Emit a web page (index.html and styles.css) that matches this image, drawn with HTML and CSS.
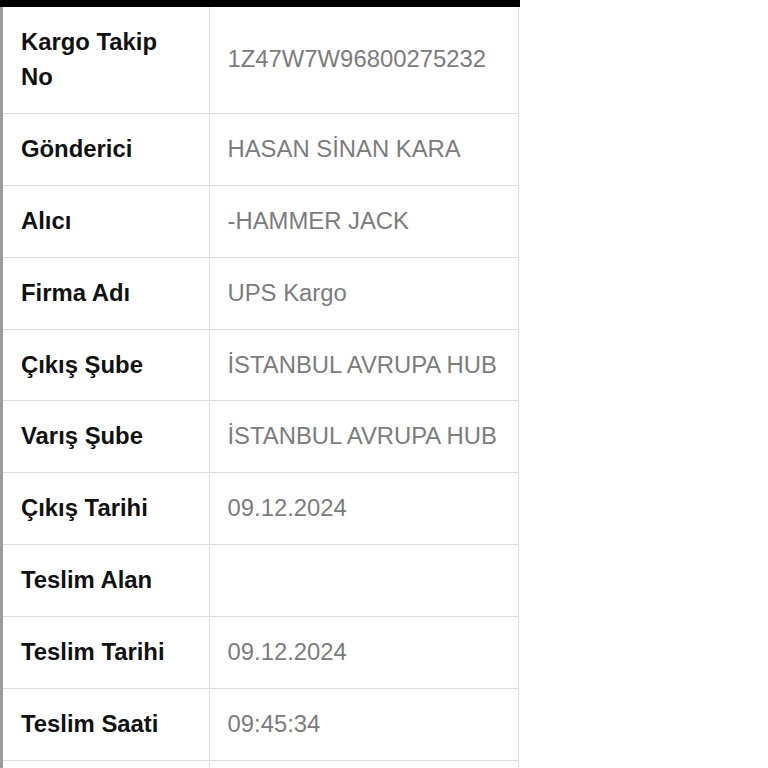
FILE: index.html
```html
<!DOCTYPE html>
<html lang="tr">
<head>
    <meta charset="UTF-8">
    <title>Kargo Takip</title>
    <meta name="viewport" content="width=device-width, initial-scale=1">
    <link rel="stylesheet" href="styles.css">
</head>
<body>
    <div class="frame">
        <div class="topbar"></div>
        <div class="panel">
            <table class="info-table">
                <tr>
                    <th>Kargo Takip No</th>
                    <td>1Z47W7W96800275232</td>
                </tr>
                <tr>
                    <th>Gönderici</th>
                    <td>HASAN SİNAN KARA</td>
                </tr>
                <tr>
                    <th>Alıcı</th>
                    <td>-HAMMER JACK</td>
                </tr>
                <tr>
                    <th>Firma Adı</th>
                    <td>UPS Kargo</td>
                </tr>
                <tr>
                    <th>Çıkış Şube</th>
                    <td>İSTANBUL AVRUPA HUB</td>
                </tr>
                <tr>
                    <th>Varış Şube</th>
                    <td>İSTANBUL AVRUPA HUB</td>
                </tr>
                <tr>
                    <th>Çıkış Tarihi</th>
                    <td>09.12.2024</td>
                </tr>
                <tr>
                    <th>Teslim Alan</th>
                    <td></td>
                </tr>
                <tr>
                    <th>Teslim Tarihi</th>
                    <td>09.12.2024</td>
                </tr>
                <tr>
                    <th>Teslim Saati</th>
                    <td>09:45:34</td>
                </tr>
                <tr>
                    <th>&nbsp;</th>
                    <td>&nbsp;</td>
                </tr>
            </table>
        </div>
    </div>
</body>
</html>
```

FILE: styles.css
```css
/* Base */
* {
    box-sizing: border-box;
    margin: 0;
    padding: 0;
}
body {
    font-family: 'Liberation Sans', Arial, sans-serif;
    background: #fff;
    overflow: hidden;
}
/* Frame */
.frame {
    width: 520px;
}
.topbar {
    height: 7px;
    background: #000;
}
.panel {
    border-left: 3px solid #9c9c9c;
}
/* Table */
.info-table {
    width: 516px;
    border-collapse: collapse;
    font-size: 23.85px;
    line-height: 34.9px;
}
.info-table th,
.info-table td {
    text-align: left;
    vertical-align: middle;
    padding: 18px 18px;
    border-bottom: 1px solid #dcdcdc;
    border-right: 1px solid #dcdcdc;
}
.info-table th {
    width: 206px;
    font-weight: bold;
    color: #111;
}
.info-table td {
    color: #7c7c7c;
}
```
